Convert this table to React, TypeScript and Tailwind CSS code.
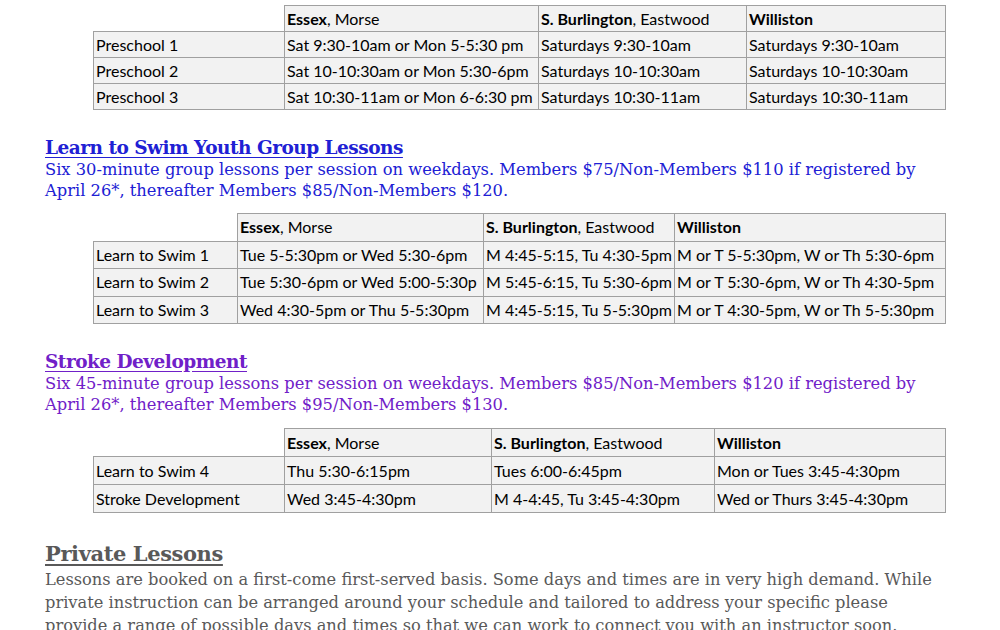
import React from "react";

type Row = string[];

const cal = { fontFamily: "Lato, 'Open Sans', sans-serif" };
const serif = { fontFamily: "'DejaVu Serif', 'Liberation Serif', serif" };

function Loc({ b, r }: { b: string; r?: string }) {
  return (
    <>
      <span className="font-bold">{b}</span>
      {r ? <span>, {r}</span> : null}
    </>
  );
}

function Schedule({ widths, rows, rowH }: { widths: number[]; rows: Row[]; rowH: string }) {
  return (
    <table className="ml-[93px] table-fixed border-collapse text-[16px] text-black" style={cal}>
      <colgroup>
        {widths.map((w, i) => (
          <col key={i} style={{ width: w }} />
        ))}
      </colgroup>
      <thead>
        <tr className={rowH}>
          <th className="p-0"></th>
          <th className="border border-[#a0a0a0] bg-[#f2f2f2] px-[2px] text-left font-normal whitespace-nowrap">
            <Loc b="Essex" r="Morse" />
          </th>
          <th className="border border-[#a0a0a0] bg-[#f2f2f2] px-[2px] text-left font-normal whitespace-nowrap">
            <Loc b="S. Burlington" r="Eastwood" />
          </th>
          <th className="border border-[#a0a0a0] bg-[#f2f2f2] px-[2px] text-left font-normal whitespace-nowrap">
            <Loc b="Williston" />
          </th>
        </tr>
      </thead>
      <tbody>
        {rows.map((r, i) => (
          <tr key={i} className={rowH}>
            {r.map((c, j) => (
              <td
                key={j}
                className="overflow-hidden border border-[#a0a0a0] bg-[#f2f2f2] px-[2px] whitespace-nowrap"
              >
                {c}
              </td>
            ))}
          </tr>
        ))}
      </tbody>
    </table>
  );
}

export default function App() {
  return (
    <div className="h-[630px] w-[1000px] overflow-hidden bg-white pt-[5px]">
      <Schedule
        widths={[191, 254, 208, 199]}
        rowH="h-[26px]"
        rows={[
          ["Preschool 1", "Sat 9:30-10am or Mon 5-5:30 pm", "Saturdays 9:30-10am", "Saturdays 9:30-10am"],
          ["Preschool 2", "Sat 10-10:30am or Mon 5:30-6pm", "Saturdays 10-10:30am", "Saturdays 10-10:30am"],
          ["Preschool 3", "Sat 10:30-11am or Mon 6-6:30 pm", "Saturdays 10:30-11am", "Saturdays 10:30-11am"],
        ]}
      />

      <div className="ml-[45px] mt-[26px] text-[#2020d4]" style={serif}>
        <div className="text-[18.5px] font-bold leading-[24px] tracking-[-0.5px] underline underline-offset-[3px]">
          Learn to Swim Youth Group Lessons
        </div>
        <p className="text-[16.3px] leading-[20.5px]">
          Six 30-minute group lessons per session on weekdays. Members $75/Non-Members $110 if registered by
          <br />
          April 26*, thereafter Members $85/Non-Members $120.
        </p>
      </div>

      <div className="mt-[12px]">
        <Schedule
          widths={[144, 246, 191, 271]}
          rowH="h-[27.5px]"
          rows={[
            ["Learn to Swim 1", "Tue 5-5:30pm or Wed 5:30-6pm", "M 4:45-5:15, Tu 4:30-5pm", "M or T 5-5:30pm, W or Th 5:30-6pm"],
            ["Learn to Swim 2", "Tue 5:30-6pm or Wed 5:00-5:30p", "M 5:45-6:15, Tu 5:30-6pm", "M or T 5:30-6pm, W or Th 4:30-5pm"],
            ["Learn to Swim 3", "Wed 4:30-5pm or Thu 5-5:30pm", "M 4:45-5:15, Tu 5-5:30pm", "M or T 4:30-5pm, W or Th 5-5:30pm"],
          ]}
        />
      </div>

      <div className="ml-[45px] mt-[26px] text-[#7020c8]" style={serif}>
        <div className="text-[18.5px] font-bold leading-[24px] tracking-[-0.5px] underline underline-offset-[3px]">
          Stroke Development
        </div>
        <p className="text-[16.3px] leading-[20.5px]">
          Six 45-minute group lessons per session on weekdays. Members $85/Non-Members $120 if registered by
          <br />
          April 26*, thereafter Members $95/Non-Members $130.
        </p>
      </div>

      <div className="mt-[13px]">
        <Schedule
          widths={[191, 207, 223, 231]}
          rowH="h-[28px]"
          rows={[
            ["Learn to Swim 4", "Thu 5:30-6:15pm", "Tues 6:00-6:45pm", "Mon or Tues 3:45-4:30pm"],
            ["Stroke Development", "Wed 3:45-4:30pm", "M 4-4:45, Tu 3:45-4:30pm", "Wed or Thurs 3:45-4:30pm"],
          ]}
        />
      </div>

      <div className="ml-[45px] mt-[27px] text-[#595959]" style={serif}>
        <div className="text-[21px] font-bold leading-[28px] tracking-[-0.4px] underline underline-offset-[3px]">
          Private Lessons
        </div>
        <p className="text-[16.25px] leading-[23px]">
          Lessons are booked on a first-come first-served basis. Some days and times are in very high demand. While
          <br />
          private instruction can be arranged around your schedule and tailored to address your specific please
          <br />
          provide a range of possible days and times so that we can work to connect you with an instructor soon.
        </p>
      </div>
    </div>
  );
}
